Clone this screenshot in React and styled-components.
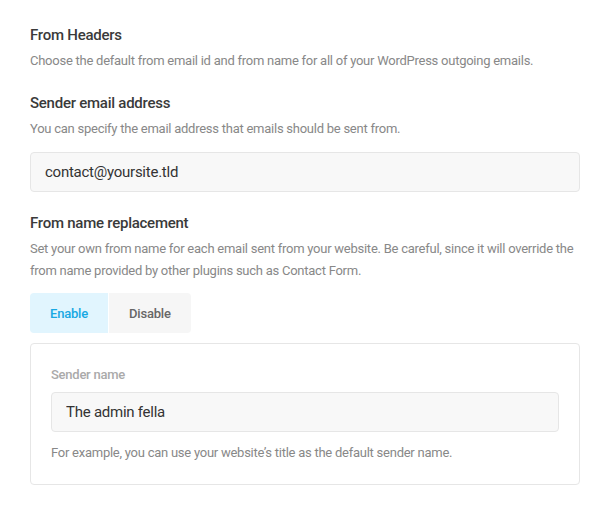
import React, { useState } from "react";
import styled, { createGlobalStyle } from "styled-components";

const GlobalStyle = createGlobalStyle`
  * { box-sizing: border-box; }
  body {
    margin: 0;
    background: #ffffff;
    font-family: Roboto, "Liberation Sans", Arial, sans-serif;
    letter-spacing: -0.25px;
    -webkit-font-smoothing: antialiased;
  }
`;

const Page = styled.div`
  padding: 24px 30px 20px 30px;
  width: 610px;
`;

const Section = styled.section`
  display: flex;
  flex-direction: column;
  & + & {
    margin-top: 20px;
  }
`;

const Title = styled.h3`
  margin: 0;
  font-size: 15px;
  font-weight: 500;
  line-height: 22px;
  color: #3a3a3a;
`;

const Description = styled.p`
  margin: 4px 0 0 0;
  font-size: 13px;
  font-weight: 400;
  line-height: 22px;
  color: #888888;
`;

const Input = styled.input`
  display: block;
  width: 100%;
  height: 40px;
  margin-top: ${(p) => p.$top || 0}px;
  padding: 0 14px;
  background: #f8f8f8;
  border: 1px solid #e6e6e6;
  border-radius: 4px;
  font-family: Roboto, "Liberation Sans", Arial, sans-serif;
  font-size: 15px;
  letter-spacing: -0.25px;
  color: #333333;
  outline: none;
`;

const Tabs = styled.div`
  display: flex;
  gap: 1px;
  margin-top: 11px;
`;

const Tab = styled.button`
  height: 40px;
  padding: 0 20px;
  border: none;
  font-family: Roboto, "Liberation Sans", Arial, sans-serif;
  font-size: 13px;
  font-weight: 500;
  letter-spacing: -0.2px;
  cursor: pointer;
  background: ${(p) => (p.$active ? "#e1f5fe" : "#f6f6f6")};
  color: ${(p) => (p.$active ? "#17a8e3" : "#666666")};
  &:first-child {
    border-radius: 4px 0 0 4px;
  }
  &:last-child {
    border-radius: 0 4px 4px 0;
  }
`;

const Box = styled.div`
  margin-top: 10px;
  padding: 20px;
  border: 1px solid #e6e6e6;
  border-radius: 4px;
`;

const Label = styled.label`
  display: block;
  font-size: 13px;
  font-weight: 500;
  line-height: 22px;
  color: #aaaaaa;
`;

const Help = styled.p`
  margin: 10px 0 0 0;
  font-size: 13px;
  line-height: 22px;
  color: #888888;
`;

export default function App() {
  const [enabled, setEnabled] = useState(true);
  return (
    <Page>
      <GlobalStyle />
      <Section>
        <Title>From Headers</Title>
        <Description>
          Choose the default from email id and from name for all of your
          WordPress outgoing emails.
        </Description>
      </Section>
      <Section>
        <Title>Sender email address</Title>
        <Description>
          You can specify the email address that emails should be sent from.
        </Description>
        <Input $top={12} defaultValue="contact@yoursite.tld" />
      </Section>
      <Section>
        <Title>From name replacement</Title>
        <Description>
          Set your own from name for each email sent from your website. Be
          careful, since it will override the from name provided by other
          plugins such as Contact Form.
        </Description>
        <Tabs>
          <Tab $active={enabled} onClick={() => setEnabled(true)}>
            Enable
          </Tab>
          <Tab $active={!enabled} onClick={() => setEnabled(false)}>
            Disable
          </Tab>
        </Tabs>
        <Box>
          <Label>Sender name</Label>
          <Input $top={6} defaultValue="The admin fella" />
          <Help>
            For example, you can use your website’s title as the default
            sender name.
          </Help>
        </Box>
      </Section>
    </Page>
  );
}
